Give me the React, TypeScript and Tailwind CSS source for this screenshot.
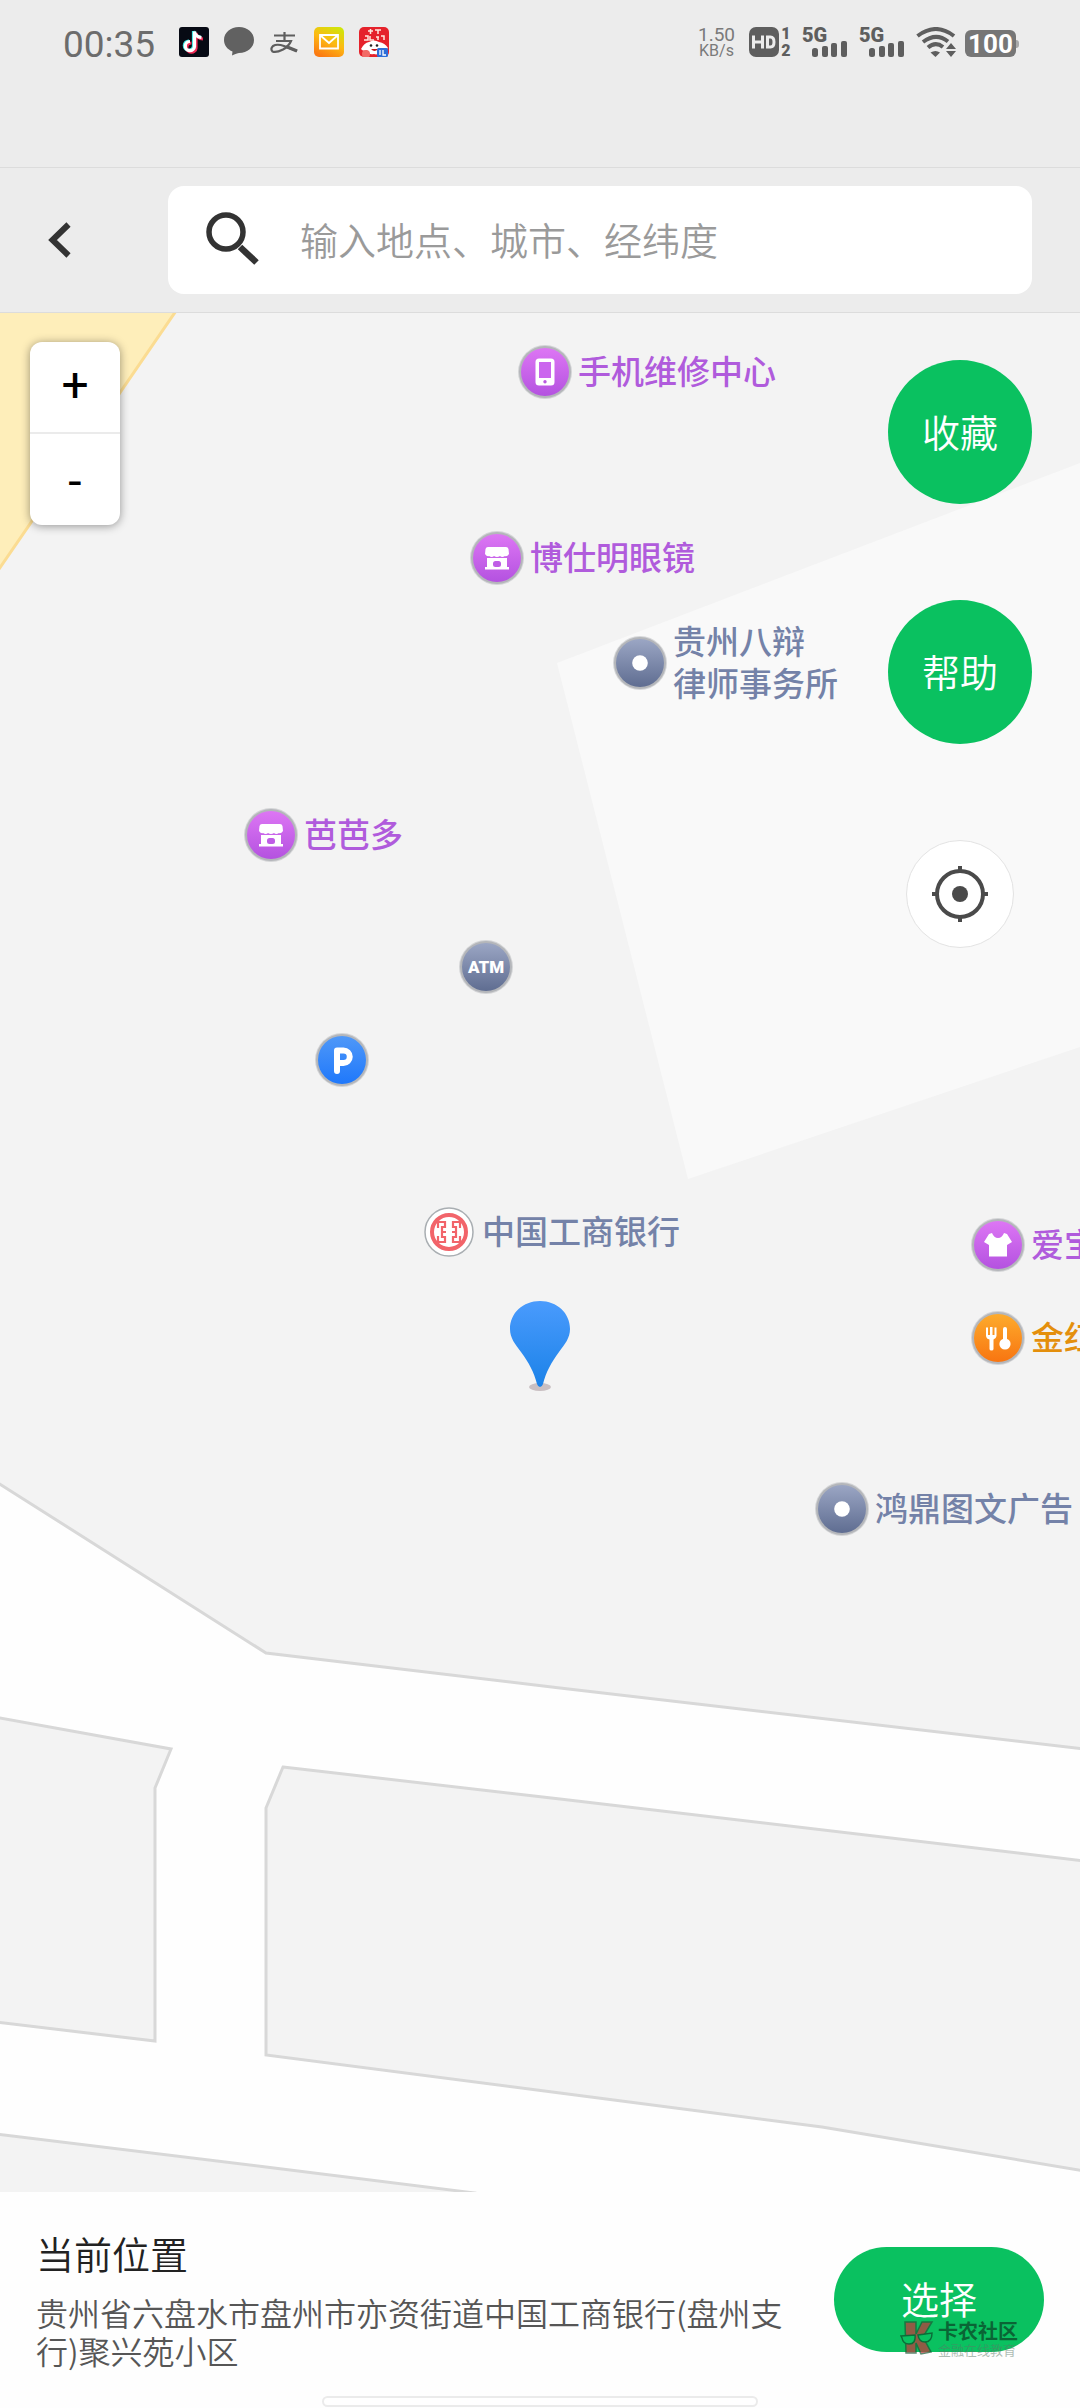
import React from "react";

type PoiKind = "phone" | "shop" | "dot" | "atm" | "parking" | "bank" | "shirt" | "food";

type Poi = {
  id: string;
  x: number;
  y: number;
  kind: PoiKind;
  lines: string[];
  tone: "purple" | "slate" | "orange";
};

const MAP_W = 1080;
const MAP_H = 1879;

const pois: Poi[] = [
  { id: "phone", x: 546, y: 59, kind: "phone", lines: ["手机维修中心"], tone: "purple" },
  { id: "glasses", x: 498, y: 245, kind: "shop", lines: ["博仕明眼镜"], tone: "purple" },
  { id: "law", x: 641, y: 350, kind: "dot", lines: ["贵州八辩", "律师事务所"], tone: "slate" },
  { id: "baba", x: 272, y: 522, kind: "shop", lines: ["芭芭多"], tone: "purple" },
  { id: "atm", x: 487, y: 654, kind: "atm", lines: [], tone: "slate" },
  { id: "parking", x: 343, y: 747, kind: "parking", lines: [], tone: "slate" },
  { id: "icbc", x: 450, y: 919, kind: "bank", lines: ["中国工商银行"], tone: "slate" },
  { id: "aibao", x: 999, y: 932, kind: "shirt", lines: ["爱宝"], tone: "purple" },
  { id: "jin", x: 999, y: 1025, kind: "food", lines: ["金红"], tone: "orange" },
  { id: "print", x: 843, y: 1196, kind: "dot", lines: ["鸿鼎图文广告"], tone: "slate" },
];

const toneClass = {
  purple: "text-[#b05bdc]",
  slate: "text-[#7482a8]",
  orange: "text-[#e48f0c]",
};

const discFill: Record<PoiKind, string> = {
  phone: "url(#g-purple)",
  shop: "url(#g-purple)",
  shirt: "url(#g-purple)",
  dot: "url(#g-slate)",
  atm: "url(#g-slate)",
  parking: "url(#g-blue)",
  food: "url(#g-orange)",
  bank: "#ffffff",
};

function PoiIcon({ kind }: { kind: PoiKind }) {
  if (kind === "bank") {
    const half = "M-11 -4V-10H-4V-5H-7V0H-3M-7 0V5H-4V10H-11V4";
    return (
      <svg viewBox="-27 -27 54 54" className="size-[54px] shrink-0" aria-hidden="true">
        <circle r="24" fill="#fff" stroke="#a9aeb2" strokeWidth="1.5" />
        <circle r="17" fill="#fff" stroke="#f2646a" strokeWidth="4" />
        <g fill="none" stroke="#f2646a" strokeWidth="2.2">
          <path d={half} />
          <path d={half} transform="scale(-1 1)" />
        </g>
      </svg>
    );
  }
  return (
    <svg viewBox="-27 -27 54 54" className="size-[54px] shrink-0" aria-hidden="true">
      <circle r="27" fill="#b4b6ba" opacity="0.5" />
      <circle r="26" fill="#b4b6ba" />
      <circle r="24" fill={discFill[kind]} />
      {kind === "phone" && (
        <>
          <rect x="-9.5" y="-13.5" width="19" height="27" rx="3.5" fill="#fff" />
          <rect x="-6" y="-10" width="12" height="16" fill="#cb66ee" />
          <circle cy="9.8" r="1.7" fill="#b95ae0" />
        </>
      )}
      {kind === "shop" && (
        <>
          <path d="M-9 -11H9Q11 -11 11.5 -9L12 -4Q10 -1 8 -2Q5 0 3 -2Q0 0 -3 -2Q-5 0 -8 -2Q-10 -1 -12 -4L-11.5 -9Q-11 -11 -9 -11Z" fill="#fff" />
          <path d="M-10 0H10V9H12V11.500H-12V9H-10Z" fill="#fff" />
          <rect x="-4" y="3" width="8" height="6" rx="2.500" fill="#bf5de6" />
        </>
      )}
      {kind === "dot" && <circle r="7.800" fill="#fff" />}
      {kind === "atm" && (
        <text y="6" textAnchor="middle" fill="#fff" className="font-[Roboto,sans-serif] text-[17px] font-black">
          ATM
        </text>
      )}
      {kind === "parking" && (
        <path d="M-5 11V-9.500H1.500A6 6 0 0 1 1.500 3H-4" fill="none" stroke="#fff" strokeWidth="6" strokeLinejoin="round" strokeLinecap="round" />
      )}
      {kind === "shirt" && (
        <path d="M-6 -12Q-4 -7 0 -7Q4 -7 6 -12L9 -11L14 -3L9 0V11.500H-9V0L-14 -3L-9 -11Z" fill="#fff" />
      )}
      {kind === "food" && (
        <g fill="#fff">
          <path d="M-12 -10.500H-10V-3H-8V-11H-5.500V-3H-3.500V-10.500H-1.500V-2Q-2 1 -4.500 1.500V11Q-4.500 12.500 -6.500 12.500Q-8.500 12.500 -8.500 11V1.500Q-11.500 1 -12 -2Z" />
          <path d="M5 -9Q5 -11 7 -11Q9 -11 9 -9V1H5Z" />
          <circle cx="7" cy="6" r="5.600" />
        </g>
      )}
    </svg>
  );
}

function StatusBar() {
  const signal = (key: string) => (
    <div key={key} className="relative h-[30px] w-[45px]">
      <span className="absolute -top-1 left-0 text-[20px] leading-6 font-black">5G</span>
      <svg viewBox="0 0 45 30" className="h-[30px] w-[45px]" aria-hidden="true">
        <g fill="#5e5e5e">
          <rect x="10" y="21" width="6" height="9" rx="2.500" />
          <rect x="20" y="19" width="6" height="11" rx="2" />
          <rect x="29" y="16" width="6" height="14" rx="2" />
          <rect x="39" y="14" width="6" height="16" rx="2" />
        </g>
      </svg>
    </div>
  );
  return (
    <div className="flex h-[167px] items-start justify-between pt-[27px] pr-[61px] pl-[63px] font-[Roboto,sans-serif] text-[#5e5e5e]">
      <div className="flex h-[30px] items-center">
        <time className="mr-[21px] w-[95px] pt-1 text-[37px] leading-none text-[#6c6c6c]">00:35</time>
        <div className="flex items-center gap-[15px]">
          <svg viewBox="0 0 30 30" className="size-[30px]" aria-hidden="true">
            <rect width="30" height="30" rx="3" fill="#070a14" />
            <g fill="none" strokeWidth="3.200">
              <path d="M15.500 4.500V19.500A4.600 4.600 0 1 1 11 14.500M15.500 4.500Q16.500 10 22.500 10.500" stroke="#3de8e4" transform="translate(-1 -0.500)" />
              <path d="M15.500 4.500V19.500A4.600 4.600 0 1 1 11 14.500M15.500 4.500Q16.500 10 22.500 10.500" stroke="#ee2b56" transform="translate(1.500 1.500)" />
              <path d="M15.500 4.500V19.500A4.600 4.600 0 1 1 11 14.500M15.500 4.500Q16.500 10 22.500 10.500" stroke="#fff" />
            </g>
          </svg>
          <svg viewBox="0 0 30 30" className="size-[30px]" aria-hidden="true">
            <path d="M15 0C23.500 0 30 5.600 30 13S23.500 26 15 26C14 26 11 27 8 28.500L8.500 24.500C3.500 22.500 0 18.300 0 13C0 5.600 6.500 0 15 0Z" fill="#616161" />
          </svg>
          <svg viewBox="0 0 30 30" className="size-[30px]" aria-hidden="true">
            <g fill="none" stroke="#5e5e5e" strokeWidth="2.200">
              <path d="M5 8.500H26M15.500 5V14M7 14H22Q20 19 14 22.500Q7 26 3.500 24.500Q1 22 4 19Q8 16.500 15 19L28 24" />
              <path d="M17 19.500L28 24" strokeWidth="3.500" />
            </g>
          </svg>
          <svg viewBox="0 0 30 30" className="size-[30px]" aria-hidden="true">
            <defs>
              <linearGradient id="g-mail" x1="0.800" y1="0" x2="0.300" y2="1">
                <stop offset="0" stopColor="#cfe60a" />
                <stop offset="0.500" stopColor="#fdb913" />
                <stop offset="1" stopColor="#fb7a12" />
              </linearGradient>
            </defs>
            <rect width="30" height="30" rx="5" fill="url(#g-mail)" />
            <path d="M6 8H24V21.500H6ZM6.500 8.500L15 16L23.500 8.500" fill="none" stroke="#fff" strokeWidth="1.800" />
          </svg>
          <svg viewBox="0 0 30 30" className="size-[30px]" aria-hidden="true">
            <rect width="30" height="30" rx="5" fill="#e5222b" />
            <g stroke="#ffe9df" strokeWidth="1.500" fill="none">
              <path d="M9 4H14M11.500 2V7M16 3H22M19 3V7M6 9H9V13H5M11 9V13H15M17 10H20M19 10V13M22 9H25V13" />
            </g>
            <path d="M2 22Q5 16 10 15Q15 12 20 15Q26 16 29 21Q27 24 23 22Q20 29 15 27Q9 28 8 23Q4 25 2 22Z" fill="#fff" />
            <circle cx="12" cy="18.500" r="1.300" fill="#222" />
            <circle cx="18" cy="18.500" r="1.300" fill="#222" />
            <path d="M12 22H19Q15.500 26 12 22Z" fill="#c4161c" />
            <circle cx="7" cy="27" r="4" fill="#f26b66" />
            <rect x="18" y="21" width="11" height="9" rx="1.500" fill="#2e6fd8" />
            <path d="M21 23V28M24 23V28H27" stroke="#fff" strokeWidth="1.300" fill="none" />
          </svg>
        </div>
      </div>

      <div className="flex h-[30px] items-center">
        <div className="mr-[15px] flex w-[35px] flex-col items-center text-[#7a7a7a]">
          <span className="text-[19px] leading-[17px]">1.50</span>
          <span className="text-[16px] leading-4">KB/s</span>
        </div>
        <div className="mr-[11px] flex h-[30px] items-center gap-[2px]">
          <svg viewBox="0 0 30 30" className="size-[30px]" aria-hidden="true">
            <rect width="30" height="30" rx="7" fill="#5e5e5e" />
            <path d="M4.500 8.500V21.500M13.500 8.500V21.500M4.500 15H13.500M18.500 10H21.500Q25 10 25 15T21.500 20H18.500Z" fill="none" stroke="#ececec" strokeWidth="3" />
          </svg>
          <div className="flex w-[10px] flex-col items-center text-[16px] leading-[17px] font-black">
            <span>1</span>
            <span>2</span>
          </div>
        </div>
        <div className="mr-3 flex gap-3">{["sim1", "sim2"].map(signal)}</div>
        <svg viewBox="0 0 40 30" className="mr-[9px] h-[30px] w-10" aria-hidden="true">
          <g fill="none" stroke="#5e5e5e" strokeWidth="4">
            <path d="M1.500 9Q20 -5 38 9" />
            <path d="M7 15Q20 5 32 14.500" />
            <path d="M12 20.500Q19.500 14 27 20" />
          </g>
          <path d="M14.500 25.500Q19.500 22.500 24 25.500L19.500 30Z" fill="#5e5e5e" />
          <path d="M35 16L40 22H30ZM35 30L30 24H40Z" fill="#5e5e5e" />
        </svg>
        <div className="flex items-center pt-[3px]">
          <div className="flex h-[27px] w-[51px] items-center justify-center rounded-md bg-[#767676] text-[26px] leading-none font-bold text-white">
            100
          </div>
          <div className="h-2 w-[3px] rounded-r-sm bg-[#a9a9a9]" />
        </div>
      </div>
    </div>
  );
}

function Header() {
  return (
    <header className="flex items-center border-y border-[#dcdcdc] py-[18px] pr-12">
      <button type="button" aria-label="返回" className="flex h-[108px] w-[168px] items-center pl-12">
        <svg viewBox="0 0 24 40" className="h-10 w-6" aria-hidden="true">
          <path d="M20.500 4.500L4.500 20L20.500 35.500" fill="none" stroke="#333" strokeWidth="6" />
        </svg>
      </button>
      <label className="flex h-[108px] flex-1 items-center rounded-2xl bg-white pl-9">
        <svg viewBox="0 0 60 60" className="size-[60px]" aria-hidden="true">
          <circle cx="22" cy="22" r="17" fill="none" stroke="#333" strokeWidth="5.500" />
          <path d="M36 37L52.500 52.500" stroke="#333" strokeWidth="6.500" />
        </svg>
        <input
          type="search"
          aria-label="搜索地点"
          placeholder="输入地点、城市、经纬度"
          className="ml-9 min-w-0 flex-1 bg-transparent pb-1 text-[38px] font-[350] text-[#333] outline-none placeholder:text-[#9a9a9a]"
        />
      </label>
    </header>
  );
}

function MapBase() {
  return (
    <svg viewBox={`0 0 ${MAP_W} ${MAP_H}`} preserveAspectRatio="none" className="absolute inset-0 size-full" aria-hidden="true">
      <defs>
        <linearGradient id="g-purple" x1="0" y1="0" x2="0" y2="1">
          <stop offset="0" stopColor="#dd76f4" />
          <stop offset="1" stopColor="#b452e0" />
        </linearGradient>
        <linearGradient id="g-slate" x1="0" y1="0" x2="0" y2="1">
          <stop offset="0" stopColor="#9ba6c4" />
          <stop offset="1" stopColor="#5f6d91" />
        </linearGradient>
        <linearGradient id="g-blue" x1="0" y1="0" x2="0" y2="1">
          <stop offset="0" stopColor="#4f98f8" />
          <stop offset="1" stopColor="#1f78fb" />
        </linearGradient>
        <linearGradient id="g-orange" x1="0" y1="0" x2="0" y2="1">
          <stop offset="0" stopColor="#fdab2c" />
          <stop offset="1" stopColor="#f87511" />
        </linearGradient>
      </defs>
      <rect width={MAP_W} height={MAP_H} fill="#fefefe" />
      <g fill="#f3f3f3" stroke="#d8d8d8" strokeWidth="3">
        <path d="M-5 -5H1085V1436L560 1375L266 1340L-5 1168Z" />
        <path d="M-5 1404L171 1436L155 1475V1728L-5 1709Z" />
        <path d="M283 1454L560 1486L1085 1548V1858L822 1814L560 1780L266 1742V1495Z" />
        <path d="M-5 1821L266 1854L475 1880V1890H-5Z" />
      </g>
      <path d="M557 350L1080 150V734L688 866Z" fill="#f9f9f9" />
      <path d="M-5 -5H178L-5 262Z" fill="#feeeba" stroke="#fbdc92" strokeWidth="3" />
    </svg>
  );
}

function MapView() {
  return (
    <main className="relative min-h-[1300px] flex-1 overflow-hidden">
      <MapBase />
      {pois.map((p) => (
        <div
          key={p.id}
          className="absolute -ml-7 flex -translate-y-1/2 items-center gap-[6px]"
          style={{ left: `${(p.x / MAP_W) * 100}%`, top: `${(p.y / MAP_H) * 100}%` }}
        >
          <PoiIcon kind={p.kind} />
          {p.lines.length > 0 && (
            <div className={`pb-1 text-[33px] leading-[42px] font-medium whitespace-nowrap ${toneClass[p.tone]}`}>
              {p.lines.map((line) => (
                <div key={line}>{line}</div>
              ))}
            </div>
          )}
        </div>
      ))}

      <div className="absolute top-[52.600%] left-1/2 -ml-[30px]">
        <svg viewBox="0 0 60 92" className="h-[92px] w-[60px]" aria-label="当前位置标记">
          <defs>
            <linearGradient id="g-pin" x1="0" y1="0" x2="0" y2="1">
              <stop offset="0" stopColor="#4a9bfd" />
              <stop offset="1" stopColor="#1b82e8" />
            </linearGradient>
          </defs>
          <ellipse cx="30" cy="86" rx="11" ry="4" fill="#c9bfc2" />
          <path d="M30 0C47 0 60 12 60 28C60 37 55 43 49 51C41 62 36 71 33 83Q32 86 30 86Q28 86 27 83C24 71 19 62 11 51C5 43 0 37 0 28C0 12 13 0 30 0Z" fill="url(#g-pin)" />
        </svg>
      </div>

      <div className="absolute top-[29px] left-[30px] flex w-[90px] flex-col divide-y-2 divide-[#ebebeb] overflow-hidden rounded-xl bg-white font-[Roboto,sans-serif] text-[48px] leading-none text-black shadow-[0_1px_10px_rgba(0,0,0,0.4)]">
        <button type="button" aria-label="放大" className="h-[92px] pb-1">
          +
        </button>
        <button type="button" aria-label="缩小" className="h-[91px] pt-1">
          -
        </button>
      </div>

      <div className="absolute top-[47px] right-12 flex w-36 flex-col items-center gap-24">
        <button type="button" className="size-36 rounded-full bg-[#0ac160] pb-1 text-[38px] font-[350] text-white">
          收藏
        </button>
        <button type="button" className="size-36 rounded-full bg-[#0ac160] pb-1 text-[38px] font-[350] text-white">
          帮助
        </button>
        <button type="button" aria-label="定位" className="flex size-[108px] items-center justify-center rounded-full border border-[#e3e3e3] bg-white">
          <svg viewBox="-28 -28 56 56" className="size-14" aria-hidden="true">
            <circle r="23" fill="none" stroke="#4a4a4a" strokeWidth="4" />
            <circle r="8" fill="#4a4a4a" />
            <path d="M0 -28V-22M0 22V28M-28 0H-22M22 0H28" stroke="#4a4a4a" strokeWidth="4" />
          </svg>
        </button>
      </div>
    </main>
  );
}

function Watermark() {
  return (
    <div className="pointer-events-none absolute top-[74px] left-[66px] flex items-start gap-1 whitespace-nowrap opacity-70">
      <svg viewBox="0 0 34 34" className="size-[34px]" aria-hidden="true">
        <path d="M5 1H16V13L22 1H32L23 16L31 31L21 33L16 22V32H6Z" fill="#c8323a" stroke="#1b5a34" strokeWidth="1.500" />
        <path d="M1 15L15 14Q16 23 9 23Q3 23 2 17ZM18 14L32 12Q32 21 25 21Q19 21 18 14Z" fill="#0ac160" stroke="#0c4a28" strokeWidth="1.500" />
      </svg>
      <div className="flex flex-col">
        <span className="text-[20px] leading-5 font-bold text-[#0a3f24]">卡农社区</span>
        <span className="mt-[2px] text-[13px] leading-[14px] text-[#5b7a68] opacity-70">金融在线教育</span>
      </div>
    </div>
  );
}

function Footer() {
  return (
    <footer className="flex flex-col items-center bg-[#fefefe]">
      <div className="flex w-full items-start gap-8 pt-[35px] pr-9 pl-9">
        <section className="min-w-0 flex-1">
          <h1 className="text-[38px] leading-[52px] font-[350] text-[#222]">当前位置</h1>
          <p className="mt-[14px] text-[32px] leading-[38px] font-[350] text-[#565656]">
            贵州省六盘水市盘州市亦资街道中国工商银行(盘州支行)聚兴苑小区
          </p>
        </section>
        <div className="relative mt-5">
          <button type="button" className="h-[105px] w-[210px] rounded-full bg-[#0ac160] pb-1 text-[38px] font-[350] text-white">
            选择
          </button>
          <Watermark />
        </div>
      </div>
      <div className="mt-[27px] mb-px h-[11px] w-[436px] rounded-full border-2 border-[#ebebeb] bg-white" />
    </footer>
  );
}

export default function App() {
  return (
    <div className="flex min-h-screen flex-col bg-[#ececec] font-['Noto_Sans_CJK_SC',sans-serif]" lang="zh-CN">
      <StatusBar />
      <Header />
      <MapView />
      <Footer />
    </div>
  );
}
